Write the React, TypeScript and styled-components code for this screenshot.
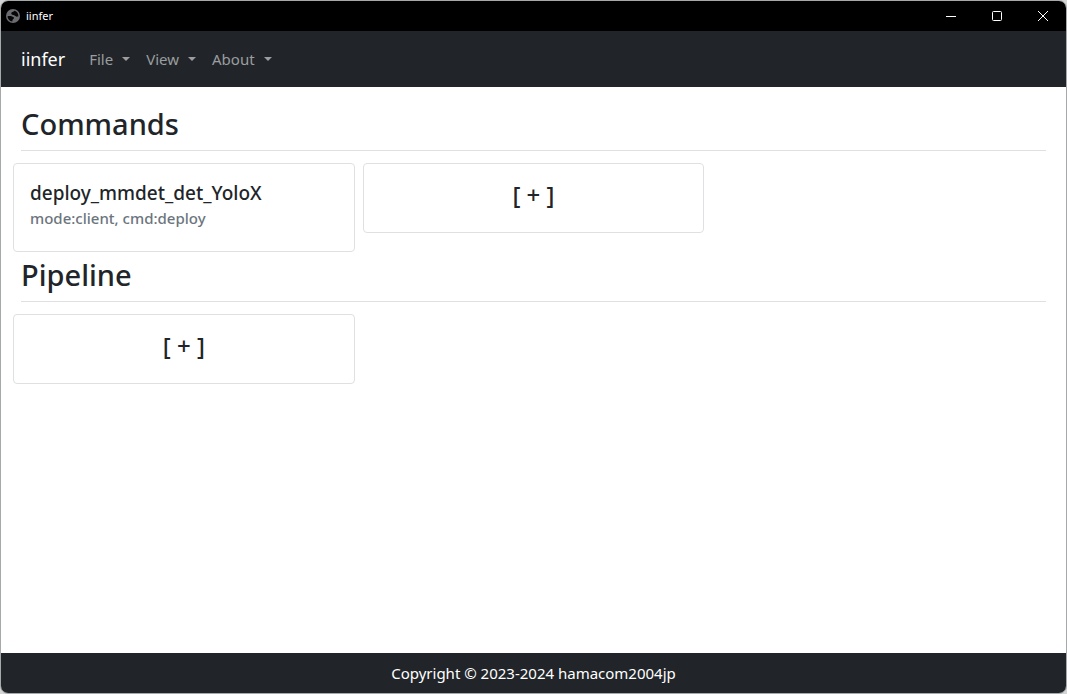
import React from "react";
import styled, { createGlobalStyle } from "styled-components";

const GlobalStyle = createGlobalStyle`
  *, *::before, *::after { box-sizing: border-box; }
  body {
    margin: 0;
    background: #d4d6d6;
    color: #212529;
    font-family: "Noto Sans", "Open Sans", sans-serif;
    font-size: 15px;
    line-height: 24px;
  }
  button { font: inherit; color: inherit; background: none; border: 0; padding: 0; cursor: pointer; }
`;

const Window = styled.div`
  display: flex;
  flex-direction: column;
  min-height: 100vh;
  border: 1px solid #a6a8a9;
  border-radius: 8px;
  overflow: hidden;
  background: #fff;
`;

const TitleBar = styled.header`
  display: flex;
  align-items: center;
  height: 30px;
  padding-left: 5px;
  background: #000;
  color: #fff;
`;

const WindowTitle = styled.span`
  flex: 1;
  margin-left: 6px;
  font-size: 11px;
  line-height: 16px;
`;

const WindowButton = styled.button`
  display: flex;
  align-items: center;
  justify-content: center;
  width: 46px;
  height: 30px;
`;

const Navbar = styled.nav`
  display: flex;
  align-items: center;
  height: 56px;
  padding: 0 20px;
  background: #212529;
`;

const Brand = styled.a`
  margin-right: 16px;
  color: #fff;
  font-size: 18px;
  line-height: 30px;
  text-decoration: none;
`;

const MenuButton = styled.button`
  display: flex;
  align-items: center;
  gap: 9px;
  padding: 8px;
  color: #9b9d9f;

  &::after {
    content: "";
    border: 4px solid transparent;
    border-top-color: currentColor;
    border-bottom: 0;
  }
`;

const Main = styled.main`
  flex: 1;
  padding: 14px 12px;
`;

const SectionTitle = styled.h2`
  margin: 0 8px 12px;
  padding-bottom: 3px;
  border-bottom: 1px solid #dee0e1;
  font-size: 29px;
  font-weight: 500;
  line-height: 46px;
`;

const CardGrid = styled.div`
  display: grid;
  grid-template-columns: repeat(3, 1fr);
  align-items: start;
  gap: 8px;
`;

const Card = styled.button<{ $centered?: boolean }>`
  padding: 17px 16px 23px;
  border: 1px solid #dee0e1;
  border-radius: 4px;
  background: #fff;
  text-align: ${(p) => (p.$centered ? "center" : "left")};
`;

const CardTitle = styled.span`
  display: block;
  margin-bottom: 4px;
  font-size: 19px;
  font-weight: 500;
  line-height: 24px;
`;

const CardSubtitle = styled.span`
  display: block;
  color: #6c757d;
  font-weight: 500;
  line-height: 19px;
`;

const AddLabel = styled.span`
  display: block;
  font-size: 24px;
  font-weight: 500;
  line-height: 28px;
`;

const Footer = styled.footer`
  padding: 8px;
  background: #212529;
  color: #fff;
  text-align: center;
`;

const GlobeIcon = () => (
  <svg width="14" height="14" viewBox="0 0 14 14" aria-hidden="true">
    <circle cx="7" cy="7" r="7" fill="#6b6c70" />
    <path
      d="M8.500 1.700C7.600 2.900 5.200 2.900 5.200 4.500c0 1.500 2 1.200 3 1.800 1.200.6 1.500 1.500 2.900 1.300.5-.1.900-.3 1.300-.1C12.600 4.700 11 2.300 8.500 1.700Z"
      fill="#060606"
    />
    <path
      d="M1.600 7.200c1.500-.3 3.300-.4 4.400.3 1 .6 2 .5 2 1.600 0 1-1.200 1.200-1.500 2-.2.500 0 .9-.2 1.300C3.700 12.200 1.600 10 1.600 7.200Z"
      fill="#060606"
    />
  </svg>
);

const controls = [
  { label: "Minimize", shape: <path d="M0 5.500h10" /> },
  { label: "Maximize", shape: <rect x="0.500" y="0.500" width="9" height="9" rx="1" /> },
  { label: "Close", shape: <path d="M0 0l10 10M10 0L0 10" /> },
];

const AddCard = ({ label }: { label: string }) => (
  <Card type="button" $centered aria-label={label}>
    <AddLabel>[ + ]</AddLabel>
  </Card>
);

export default function App() {
  return (
    <>
      <GlobalStyle />
      <Window>
        <TitleBar>
          <GlobeIcon />
          <WindowTitle>iinfer</WindowTitle>
          {controls.map(({ label, shape }) => (
            <WindowButton key={label} type="button" aria-label={label}>
              <svg width="10" height="10" viewBox="0 0 10 10" fill="none" stroke="#fff">
                {shape}
              </svg>
            </WindowButton>
          ))}
        </TitleBar>
        <Navbar>
          <Brand href="#">iinfer</Brand>
          {["File", "View", "About"].map((name) => (
            <MenuButton key={name} type="button">{name}</MenuButton>
          ))}
        </Navbar>
        <Main>
          <section>
            <SectionTitle>Commands</SectionTitle>
            <CardGrid>
              <Card type="button">
                <CardTitle>deploy_mmdet_det_YoloX</CardTitle>
                <CardSubtitle>mode:client, cmd:deploy</CardSubtitle>
              </Card>
              <AddCard label="Add command" />
            </CardGrid>
          </section>
          <section>
            <SectionTitle>Pipeline</SectionTitle>
            <CardGrid>
              <AddCard label="Add pipeline" />
            </CardGrid>
          </section>
        </Main>
        <Footer>Copyright © 2023-2024 hamacom2004jp</Footer>
      </Window>
    </>
  );
}
